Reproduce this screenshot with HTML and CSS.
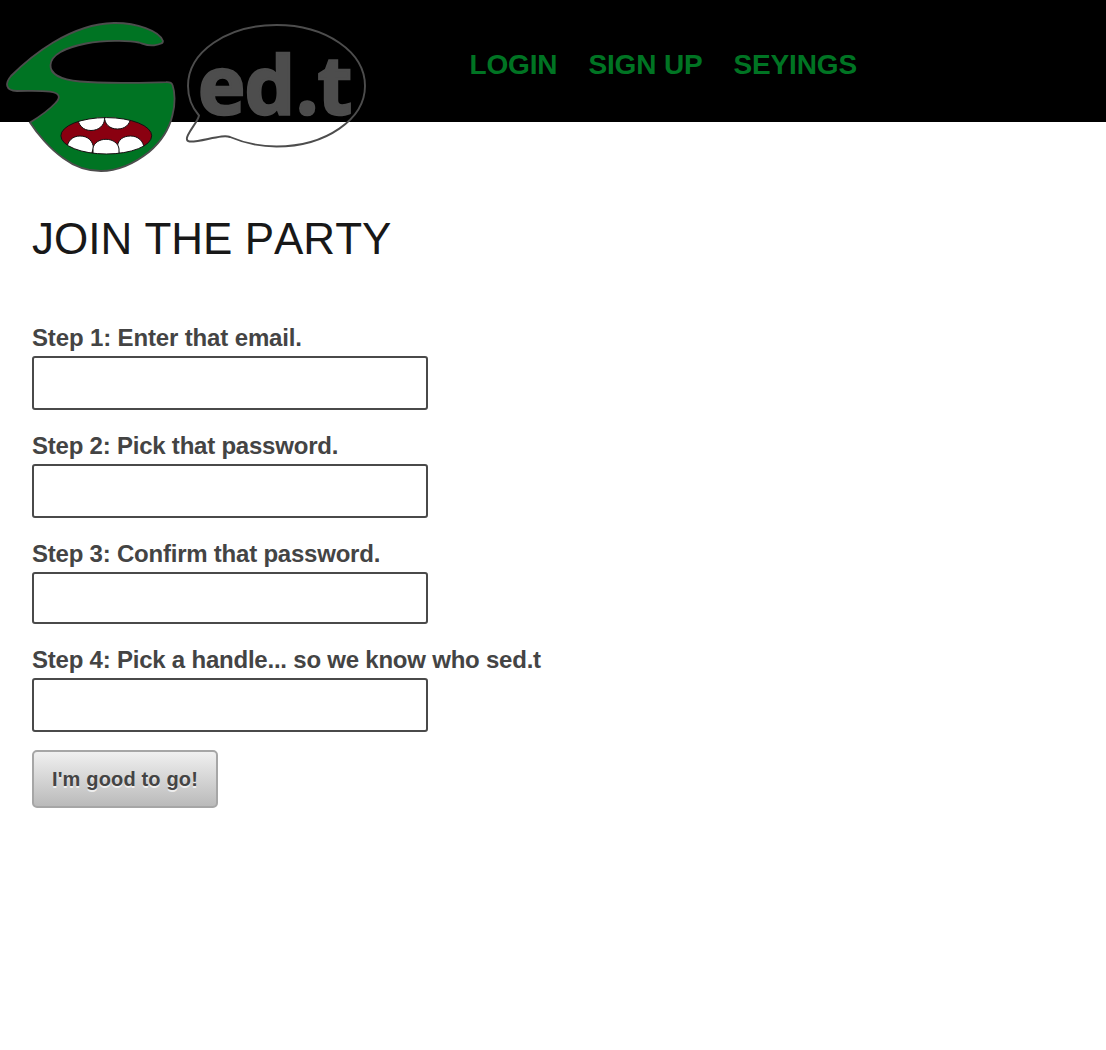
FILE: index.html
```html
<!DOCTYPE html>
<html lang="en">
<head>
<meta charset="utf-8">
<title>sed.t</title>
<link rel="stylesheet" href="styles.css">
</head>
<body>
<header class="header">
  <a class="logo" href="#" aria-label="sed.t">
    <svg width="376" height="180" viewBox="0 0 376 180">
      <defs>
        <clipPath id="mouth"><ellipse cx="106.3" cy="135.8" rx="45.4" ry="18.2"/></clipPath>
      </defs>
      <path class="face" d="M162.7 40.5C159 31 137 22.7 114 23C69 24 30 57 11 76C5 83 5 90.500 17 91C33 91 41 90.500 50 91.700C60 93 61 97.500 55.500 103C48 111 39 117 30 122.500C37 133.500 50 149 63 158C75 167 88 171 101 171C118 171 135 163 149 152C162 141 169 130 172.500 115C175.500 104 175 92 172.500 85C171.700 82.500 170 82 166 82.200C145 82.700 105 84 80 81.500C59 79.500 50 73 50.500 65C51 55 65 47.500 86 43.500C103 40.500 128 40 139 42.500C144 44 147 46 154 45.300C160 44.500 164 43 162.700 40.500Z"/>
      <g clip-path="url(#mouth)">
        <rect class="gums" x="60" y="116" width="94" height="40"/>
        <g class="teeth">
          <path d="M77.500 117C78 125 83 130.500 91 130.500C99 130.500 104.500 125 104.500 119V112H77Z"/>
          <path d="M104.500 117C104.500 124 109.500 129 117.500 129C125 129 130 124.500 130.500 118V112H104.500Z"/>
          <path d="M67 148C67.500 141 72.500 136 80 136C88 136 93 141 93.500 148L90 158H67Z"/>
          <path d="M117.500 146C118 140 123 136 130.500 136C138 136 143.500 141 144 148V158H120Z"/>
          <path d="M93 158V148C94 143 99 139.300 106 139.300C113 139.300 118.500 143.500 119 149V158Z"/>
        </g>
      </g>
      <ellipse class="lips" cx="106.3" cy="135.8" rx="45.4" ry="18.2"/>
      <path class="bubble" d="M199 115.500C191.500 107 188 96.500 188 86C188 52 227 25 276.500 25C326 25 365 52 365 86C365 119 326 146.500 276.500 146.500C260 146.500 244 143 230 137C227.500 136 225 136 221.500 136.500C210 138 198 142 189.500 141.500C186 141 186.500 138 188 135C192 127 198 121 199 115.500Z"/>
      <text class="wordmark" x="198 244.500 295.800 317.500" y="113.800">ed.t</text>
    </svg>
  </a>
  <nav class="nav">
    <a href="#">LOGIN</a>
    <a href="#">SIGN UP</a>
    <a href="#">SEYINGS</a>
  </nav>
</header>
<main class="content">
  <h1 class="title">JOIN THE PARTY</h1>
  <form class="form">
    <div class="field">
      <label for="email">Step 1: Enter that email.</label>
      <input id="email" type="text">
    </div>
    <div class="field">
      <label for="password">Step 2: Pick that password.</label>
      <input id="password" type="password">
    </div>
    <div class="field field-short">
      <label for="confirm">Step 3: Confirm that password.</label>
      <input id="confirm" type="password">
    </div>
    <div class="field">
      <label for="handle">Step 4: Pick a handle... so we know who sed.t</label>
      <input id="handle" type="text">
    </div>
    <button class="submit" type="button">I'm good to go!</button>
  </form>
</main>
</body>
</html>
```
FILE: styles.css
```css
* { box-sizing: border-box; }

body {
  margin: 0;
  background: #fff;
  color: #444;
  font-family: "Liberation Sans", Arial, sans-serif;
}

.header {
  display: flex;
  height: 122px;
  background: #000;
}

.logo { width: 376px; height: 122px; }
.logo svg { display: block; }

.face { fill: #007423; stroke: #4d4d4d; stroke-width: 1.8; }
.gums { fill: #8a0010; }
.teeth path { fill: #fff; stroke: #111; stroke-width: 1; }
.lips { fill: none; stroke: #111; stroke-width: 1; }
.bubble { fill: none; stroke: #4d4d4d; stroke-width: 1.9; }
.wordmark {
  fill: #4d4d4d;
  stroke: #4d4d4d;
  stroke-width: 2.5;
  font-family: "Open Sans", sans-serif;
  font-size: 80px;
  font-weight: 700;
}

.nav {
  display: flex;
  gap: 31px;
  margin-left: 93.5px;
  padding-top: 49px;
}

.nav a {
  color: #007423;
  font-size: 28px;
  font-weight: bold;
  line-height: 32px;
  letter-spacing: -0.15px;
  text-decoration: none;
  white-space: nowrap;
}

.content { padding: 92px 32px 0; }

.title {
  margin: 0 0 60px;
  color: #181818;
  font-size: 44px;
  font-weight: normal;
  line-height: 50px;
  font-kerning: none;
}

.form {
  display: flex;
  flex-direction: column;
  align-items: flex-start;
}

.field {
  display: flex;
  flex-direction: column;
  height: 108px;
}

.field label {
  font-size: 24px;
  font-weight: bold;
  line-height: 28px;
  letter-spacing: -0.22px;
  padding-bottom: 4px;
  white-space: nowrap;
}

.field:first-child label { letter-spacing: -0.14px; }

.field input {
  width: 396px;
  height: 54px;
  border: 2px solid #4a4a4a;
  border-radius: 3px;
  background: #fff;
  padding: 0 10px;
  font-size: 24px;
}

.field-short { height: 106px; }
.field-short input { height: 52px; }
.field:nth-child(4) { height: 104px; }

.submit {
  width: 186px;
  height: 58px;
  padding: 0;
  border: 2px solid #a6a6a6;
  border-radius: 5px;
  background: linear-gradient(#f0f0f0, #bababa);
  color: #444;
  font: bold 20px "Liberation Sans", Arial, sans-serif;
  letter-spacing: 0.17px;
  text-shadow: 0 2px 0 #eee;
}
```
